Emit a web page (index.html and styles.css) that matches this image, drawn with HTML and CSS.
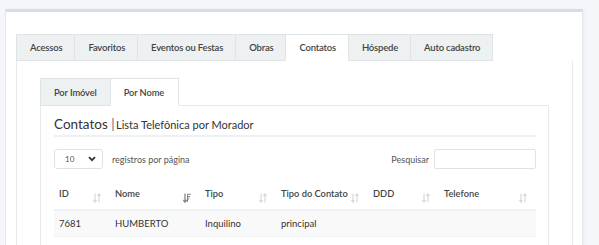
FILE: index.html
```html
<!DOCTYPE html>
<html lang="pt-BR">
<head>
    <meta charset="UTF-8">
    <meta name="viewport" content="width=device-width, initial-scale=1.0">
    <title>Contatos</title>
    <link rel="stylesheet" href="styles.css">
</head>
<body>
    <div class="card">
        <ul class="abas">
            <li>Acessos</li>
            <li>Favoritos</li>
            <li>Eventos ou Festas</li>
            <li>Obras</li>
            <li class="ativa">Contatos</li>
            <li>Hóspede</li>
            <li>Auto cadastro</li>
        </ul>
        <div class="painel">
            <ul class="abas sub">
                <li>Por Imóvel</li>
                <li class="ativa">Por Nome</li>
            </ul>
            <div class="caixa">
                <h3 class="titulo">Contatos <span class="barra">|</span> <small>Lista Telefônica por Morador</small></h3>

                <div class="controles">
                    <div class="tamanho">
                        <div class="select">
                            <span>10</span>
                            <svg width="8" height="6" viewBox="0 0 8 6"><path d="M1 1.2 L4 4.2 L7 1.2" fill="none" stroke="#333" stroke-width="1.8"/></svg>
                        </div>
                        <span>registros por página</span>
                    </div>
                    <label class="busca">Pesquisar <span class="campo"></span></label>
                </div>

                <table class="tabela">
                    <thead>
                        <tr>
                            <th class="c-id">ID <i class="ord"></i></th>
                            <th class="c-nome">Nome <i class="ord ativo"></i></th>
                            <th class="c-tipo">Tipo <i class="ord"></i></th>
                            <th class="c-tc">Tipo do Contato <i class="ord"></i></th>
                            <th class="c-ddd">DDD <i class="ord"></i></th>
                            <th class="c-tel">Telefone <i class="ord"></i></th>
                        </tr>
                    </thead>
                    <tbody>
                        <tr class="par">
                            <td>7681</td>
                            <td>HUMBERTO</td>
                            <td>Inquilino</td>
                            <td>principal</td>
                            <td></td>
                            <td></td>
                        </tr>
                        <tr>
                            <td>4906</td>
                            <td>Tete Bohm</td>
                            <td>Inquilino</td>
                            <td>principal</td>
                            <td></td>
                            <td></td>
                        </tr>
                    </tbody>
                </table>
            </div>
        </div>
    </div>

    <script>
        // icones de ordenacao das colunas
        const setas = '<svg width="8" height="10" viewBox="0 0 8 10"><path d="M2 0.5 V9 M0.3 7 L2 9.2 L3.7 7 M6 9.5 V1 M4.3 3 L6 0.8 L7.7 3" fill="none" stroke="#d6d9dc" stroke-width="1.2"/></svg>';
        const ativo = '<svg width="8" height="10" viewBox="0 0 8 10"><path d="M2 0.5 V9 M0.3 7 L2 9.2 L3.7 7" fill="none" stroke="#888" stroke-width="1.3"/><path d="M4.5 1.2 H7.8 M4.5 3.6 H7 M4.5 6 H6.2 M4.5 1 V9" fill="none" stroke="#888" stroke-width="1.1"/></svg>';
        document.querySelectorAll(".ord").forEach(el => {
            el.innerHTML = el.classList.contains("ativo") ? ativo : setas;
        });
    </script>
</body>
</html>
```

FILE: styles.css
```css
body {
    font-family: 'Lato', 'Noto Sans', sans-serif;
    background-color: #f4f6f9;
    margin: 0;
    padding: 9px 16px 0 5px;
    color: #333;
    font-size: 10px;
}

.card {
    background: white;
    border-top: 3px solid #d2dde7;
    border-left: 1px solid #e3e8ec;
    border-right: 1px solid #e3e8ec;
    box-shadow: 1px 0 2px rgba(0, 0, 0, 0.05);
    padding: 22px 9px 0 10px;
    height: 240px;
    box-sizing: border-box;
}

.abas {
    display: flex;
    list-style: none;
    margin: 0;
    padding: 0;
}

.abas li {
    height: 27px;
    box-sizing: border-box;
    padding: 0 12px 0 13px;
    display: flex;
    align-items: center;
    background: #eef1f2;
    border: 1px solid #dfe5e7;
    border-right: none;
    color: #444;
    font-weight: 600;
    font-size: 9.5px;
    letter-spacing: -0.2px;
}

.abas li:last-child {
    border-right: 1px solid #dfe5e7;
}

.abas li.ativa {
    background: white;
    border-bottom-color: white;
}

.abas li.ativa + li {
    border-left: 1px solid #dfe5e7;
}

.painel {
    border: 1px solid #e6eaec;
    border-top: none;
    padding: 17px 23px 0 23px;
    height: 190px;
}

.abas.sub li {
    height: 28px;
    padding: 0 13px;
    font-size: 9.3px;
    letter-spacing: -0.1px;
}

.abas.sub li.ativa {
    padding: 0 14px 0 13px;
}

.caixa {
    border: 1px solid #e6eaec;
    margin-top: -1px;
    padding: 0 12px 0 13px;
    height: 160px;
}

.titulo {
    margin: 0;
    padding: 10px 0 2px;
    line-height: 17px;
    font-weight: 400;
    font-size: 13.5px;
    color: #333;
    border-bottom: 2px solid #eef1f3;
}

.titulo .barra {
    color: #4b6a8a;
}

.titulo small {
    font-size: 11px;
    margin-left: -2px;
}

.controles {
    display: flex;
    justify-content: space-between;
    align-items: center;
    margin-top: 12px;
    color: #555;
    font-size: 9px;
}

.tamanho {
    display: flex;
    align-items: center;
    gap: 9px;
}

.select {
    width: 49px;
    height: 20px;
    box-sizing: border-box;
    border: 1px solid #dfe3e6;
    border-radius: 3px;
    display: flex;
    align-items: center;
    justify-content: space-between;
    padding: 0 6px 0 10px;
    font-size: 8px;
}

.busca {
    display: flex;
    align-items: center;
    gap: 5px;
}

.campo {
    display: block;
    width: 102px;
    height: 20px;
    box-sizing: border-box;
    border: 1px solid #dfe3e6;
    border-radius: 2px;
}

.tabela {
    width: 100%;
    border-collapse: collapse;
    margin-top: 9px;
}

.tabela th {
    text-align: left;
    font-weight: 600;
    font-size: 9.3px;
    color: #444;
    padding: 9px 5px 8px;
    height: 14px;
    line-height: 14px;
    border-bottom: 2px solid #eef0f2;
    position: relative;
    vertical-align: top;
}

.ord {
    position: absolute;
    right: 9px;
    top: 15px;
    line-height: 0;
}

.c-id { width: 46px; }
.c-nome { width: 80px; }
.c-tipo { width: 66px; }
.c-tc { width: 82px; }
.c-ddd { width: 61px; }

.tabela td {
    padding: 0 5px;
    height: 25px;
    font-size: 9.5px;
    border-bottom: 1px solid #eef0f2;
    color: #333;
}

.tabela tr.par td {
    background: #f9f9fa;
}
```
